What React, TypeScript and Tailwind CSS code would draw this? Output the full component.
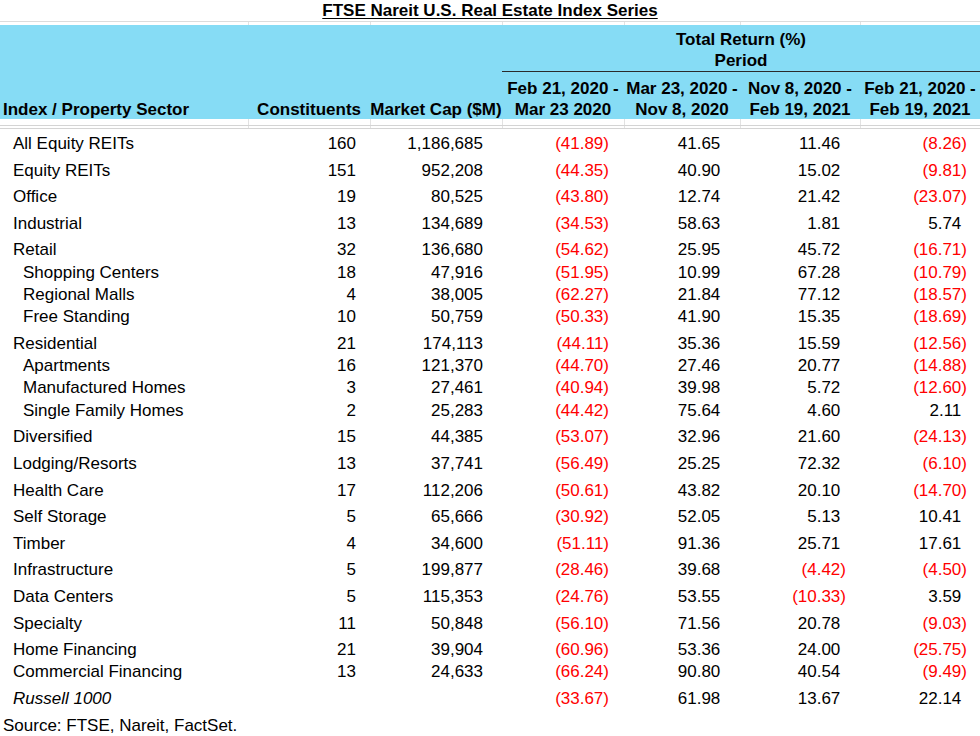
const cols = 'grid grid-cols-[248px_122px_132px_122px_116px_120px_120px]';

type Row = {
  name: string;
  n?: string;
  cap?: string;
  r: [string, string, string, string];
  sub?: boolean;
  h: string;
  italic?: boolean;
};

const rows: Row[] = [
  { name: 'All Equity REITs', n: '160', cap: '1,186,685', r: ['(41.89)', '41.65', '11.46', '(8.26)'], h: 'h-[24px]' },
  { name: 'Equity REITs', n: '151', cap: '952,208', r: ['(44.35)', '40.90', '15.02', '(9.81)'], h: 'h-[26.6px]' },
  { name: 'Office', n: '19', cap: '80,525', r: ['(43.80)', '12.74', '21.42', '(23.07)'], h: 'h-[26.6px]' },
  { name: 'Industrial', n: '13', cap: '134,689', r: ['(34.53)', '58.63', '1.81', '5.74'], h: 'h-[26.6px]' },
  { name: 'Retail', n: '32', cap: '136,680', r: ['(54.62)', '25.95', '45.72', '(16.71)'], h: 'h-[26.6px]' },
  { name: 'Shopping Centers', n: '18', cap: '47,916', r: ['(51.95)', '10.99', '67.28', '(10.79)'], sub: true, h: 'h-[22.3px]' },
  { name: 'Regional Malls', n: '4', cap: '38,005', r: ['(62.27)', '21.84', '77.12', '(18.57)'], sub: true, h: 'h-[22.3px]' },
  { name: 'Free Standing', n: '10', cap: '50,759', r: ['(50.33)', '41.90', '15.35', '(18.69)'], sub: true, h: 'h-[22.3px]' },
  { name: 'Residential', n: '21', cap: '174,113', r: ['(44.11)', '35.36', '15.59', '(12.56)'], h: 'h-[26.6px]' },
  { name: 'Apartments', n: '16', cap: '121,370', r: ['(44.70)', '27.46', '20.77', '(14.88)'], sub: true, h: 'h-[22.3px]' },
  { name: 'Manufactured Homes', n: '3', cap: '27,461', r: ['(40.94)', '39.98', '5.72', '(12.60)'], sub: true, h: 'h-[22.3px]' },
  { name: 'Single Family Homes', n: '2', cap: '25,283', r: ['(44.42)', '75.64', '4.60', '2.11'], sub: true, h: 'h-[22.3px]' },
  { name: 'Diversified', n: '15', cap: '44,385', r: ['(53.07)', '32.96', '21.60', '(24.13)'], h: 'h-[26.6px]' },
  { name: 'Lodging/Resorts', n: '13', cap: '37,741', r: ['(56.49)', '25.25', '72.32', '(6.10)'], h: 'h-[26.6px]' },
  { name: 'Health Care', n: '17', cap: '112,206', r: ['(50.61)', '43.82', '20.10', '(14.70)'], h: 'h-[26.6px]' },
  { name: 'Self Storage', n: '5', cap: '65,666', r: ['(30.92)', '52.05', '5.13', '10.41'], h: 'h-[26.6px]' },
  { name: 'Timber', n: '4', cap: '34,600', r: ['(51.11)', '91.36', '25.71', '17.61'], h: 'h-[26.6px]' },
  { name: 'Infrastructure', n: '5', cap: '199,877', r: ['(28.46)', '39.68', '(4.42)', '(4.50)'], h: 'h-[26.6px]' },
  { name: 'Data Centers', n: '5', cap: '115,353', r: ['(24.76)', '53.55', '(10.33)', '3.59'], h: 'h-[26.6px]' },
  { name: 'Specialty', n: '11', cap: '50,848', r: ['(56.10)', '71.56', '20.78', '(9.03)'], h: 'h-[26.6px]' },
  { name: 'Home Financing', n: '21', cap: '39,904', r: ['(60.96)', '53.36', '24.00', '(25.75)'], h: 'h-[26.6px]' },
  { name: 'Commercial Financing', n: '13', cap: '24,633', r: ['(66.24)', '90.80', '40.54', '(9.49)'], h: 'h-[22.3px]' },
  { name: 'Russell 1000', r: ['(33.67)', '61.98', '13.67', '22.14'], h: 'h-[27px]', italic: true },
];

const periods = [
  ['Feb 21, 2020 -', 'Mar 23 2020'],
  ['Mar 23, 2020 -', 'Nov 8, 2020'],
  ['Nov 8, 2020 -', 'Feb 19, 2021'],
  ['Feb 21, 2020 -', 'Feb 19, 2021'],
];

const retPad = ['pr-[15px]', 'pr-[14px]', 'pr-[14px]', 'pr-[13px]'];

function Ret({ v }: { v: string }) {
  const neg = v.startsWith('(');
  return (
    <span className={neg ? 'text-[#ff0000]' : ''}>
      {v}
      {!neg && <span className="invisible">)</span>}
    </span>
  );
}

function Ticks({ h }: { h: string }) {
  return (
    <div className={`${cols} ${h}`}>
      <div />
      <div className="border-l border-[#e2e2e2]" />
      <div className="border-l border-[#e2e2e2]" />
      <div className="border-l border-[#e2e2e2]" />
      <div className="border-l border-[#e2e2e2]" />
      <div className="border-l border-[#e2e2e2]" />
      <div className="border-l border-[#e2e2e2]" />
    </div>
  );
}

export default function App() {
  return (
    <div className="w-[980px] h-[736px] bg-white text-black font-['Liberation_Sans',Arial,sans-serif] text-[17px] overflow-hidden">
      <div className="h-[21px] leading-[22px] text-center font-bold underline underline-offset-2">
        FTSE Nareit U.S. Real Estate Index Series
      </div>
      <div className="h-px bg-[#dcdcdc]" />
      <Ticks h="h-[3px]" />

      <div className="h-[94px] bg-[#86dcf5] font-bold flex flex-col pt-[4px]">
        <div className={cols}>
          <div className="col-span-3" />
          <div className="col-span-4 text-center leading-[21px]">
            <div>Total Return (%)</div>
            <div className="h-[21px]">Period</div>
            <div className="h-px bg-[#2a2a2a]" />
          </div>
        </div>
        <div className={`${cols} pt-[6px] leading-[21px] items-end`}>
          <div className="pl-[3px]">Index / Property Sector</div>
          <div className="text-right pr-[9px]">Constituents</div>
          <div className="text-center whitespace-nowrap">Market Cap ($M)</div>
          {periods.map((p, i) => (
            <div key={i} className="text-center whitespace-nowrap">
              <div>{p[0]}</div>
              <div>{p[1]}</div>
            </div>
          ))}
        </div>
      </div>

      <Ticks h="h-[6px]" />
      <div className="h-px bg-[#d4d4d4]" />
      <Ticks h="h-[2px]" />
      <div className="h-px bg-[#d4d4d4]" />

      {rows.map((r) => (
        <div key={r.name} className={`${cols} ${r.h} items-end leading-[19px] whitespace-nowrap`}>
          <div className={`${r.sub ? 'pl-[23px]' : 'pl-[13px]'} ${r.italic ? 'italic' : ''}`}>{r.name}</div>
          <div className="text-right pr-[14px]">{r.n}</div>
          <div className="text-right pr-[19px]">{r.cap}</div>
          {r.r.map((v, i) => (
            <div key={i} className={`text-right ${retPad[i]}`}>
              <Ret v={v} />
            </div>
          ))}
        </div>
      ))}

      <div className="h-[27px] flex items-end leading-[19px] pl-[3px]">Source: FTSE, Nareit, FactSet.</div>
    </div>
  );
}
